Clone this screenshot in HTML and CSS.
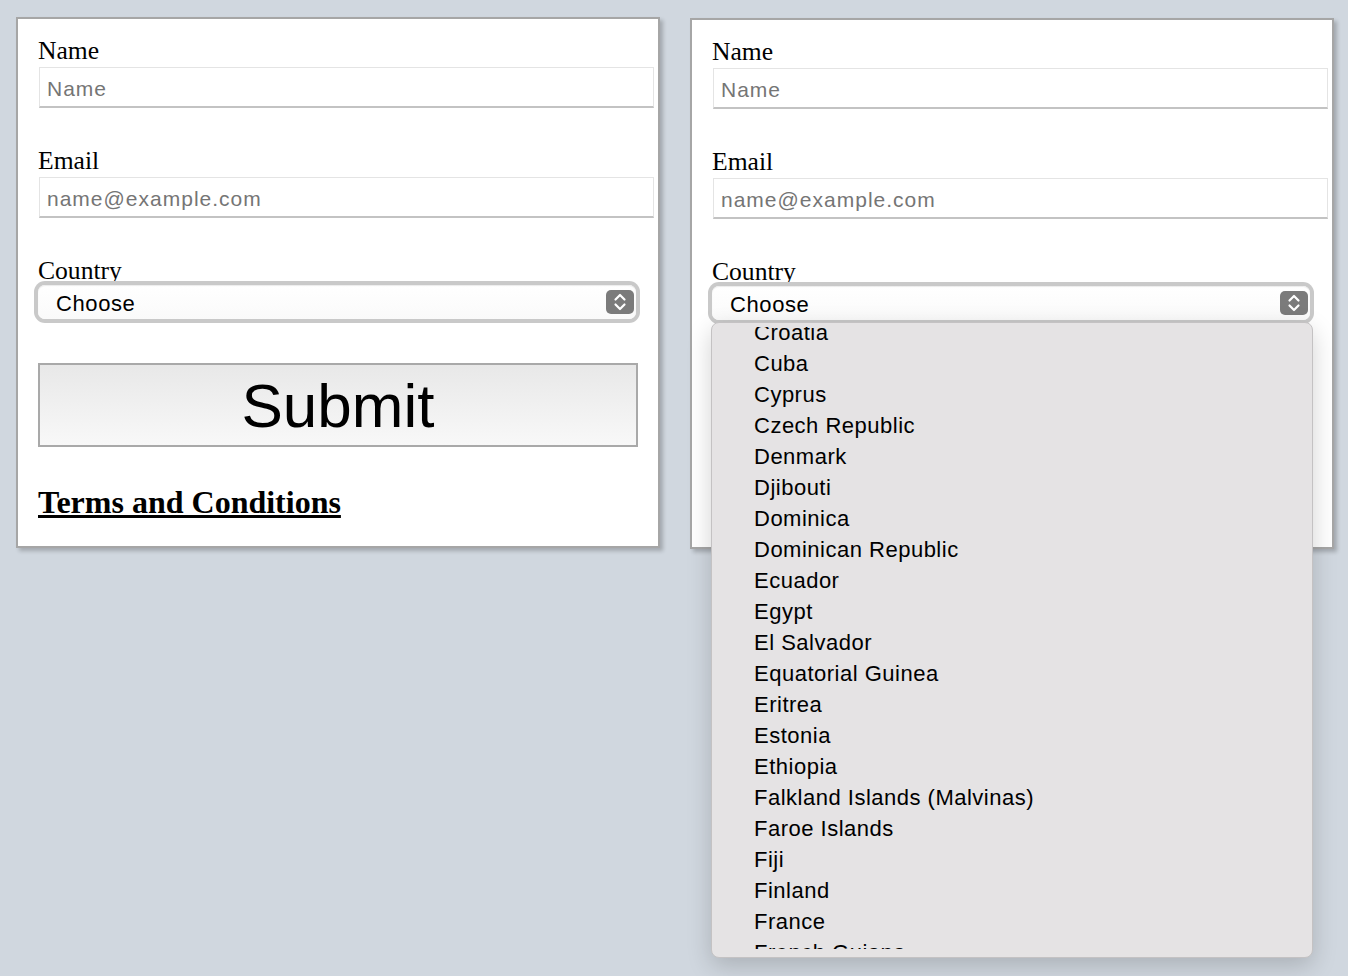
FILE: index.html
```html
<!DOCTYPE html>
<html lang="en">
<head>
<meta charset="utf-8">
<title>Form</title>
<link rel="stylesheet" href="styles.css">
</head>
<body>
<div class="page">
  <form class="card">
    <label class="label">Name</label>
    <div class="input"><span class="ph">Name</span></div>
    <label class="label">Email</label>
    <div class="input"><span class="ph">name@example.com</span></div>
    <label class="label">Country</label>
    <div class="select-wrap">
      <div class="select">
        <span class="sel-text">Choose</span>
        <span class="sel-icon">
          <svg width="28" height="24" viewBox="0 0 28 24"><rect x="0" y="0" width="28" height="24" rx="5" fill="#7b7b7b"/><path d="M9.5 9.5 L14 5 L18.5 9.5" fill="none" stroke="#fff" stroke-width="2.2" stroke-linecap="round" stroke-linejoin="round"/><path d="M9.5 14.5 L14 19 L18.5 14.5" fill="none" stroke="#fff" stroke-width="2.2" stroke-linecap="round" stroke-linejoin="round"/></svg>
        </span>
      </div>
    </div>
    <div class="button">Submit</div>
    <a class="terms" href="#">Terms and Conditions</a>
  </form>

  <form class="card card-right">
    <label class="label">Name</label>
    <div class="input"><span class="ph">Name</span></div>
    <label class="label">Email</label>
    <div class="input"><span class="ph">name@example.com</span></div>
    <label class="label">Country</label>
    <div class="select-wrap">
      <div class="select">
        <span class="sel-text">Choose</span>
        <span class="sel-icon">
          <svg width="28" height="24" viewBox="0 0 28 24"><rect x="0" y="0" width="28" height="24" rx="5" fill="#7b7b7b"/><path d="M9.5 9.5 L14 5 L18.5 9.5" fill="none" stroke="#fff" stroke-width="2.2" stroke-linecap="round" stroke-linejoin="round"/><path d="M9.5 14.5 L14 19 L18.5 14.5" fill="none" stroke="#fff" stroke-width="2.2" stroke-linecap="round" stroke-linejoin="round"/></svg>
        </span>
      </div>
      <div class="dropdown">
        <div class="viewport">
          <ul class="options">
            <li>Croatia</li>
            <li>Cuba</li>
            <li>Cyprus</li>
            <li>Czech Republic</li>
            <li>Denmark</li>
            <li>Djibouti</li>
            <li>Dominica</li>
            <li>Dominican Republic</li>
            <li>Ecuador</li>
            <li>Egypt</li>
            <li>El Salvador</li>
            <li>Equatorial Guinea</li>
            <li>Eritrea</li>
            <li>Estonia</li>
            <li>Ethiopia</li>
            <li>Falkland Islands (Malvinas)</li>
            <li>Faroe Islands</li>
            <li>Fiji</li>
            <li>Finland</li>
            <li>France</li>
            <li>French Guiana</li>
          </ul>
        </div>
      </div>
    </div>
    <div class="button">Submit</div>
    <a class="terms" href="#">Terms and Conditions</a>
  </form>
</div>
</body>
</html>
```
FILE: styles.css
```css
html, body {
  margin: 0;
  padding: 0;
  background: #d0d7df;
  height: 100%;
}

.page {
  display: flex;
  align-items: flex-start;
  gap: 30px;
  padding: 17px 0 0 16px;
}

.card {
  box-sizing: border-box;
  width: 644px;
  background: #ffffff;
  border: 2px solid #a6a6a6;
  box-shadow: 3px 3px 4px rgba(0, 0, 0, 0.22);
  padding: 17px 20px 25px 20px;
  display: flex;
  flex-direction: column;
  align-items: flex-start;
}

.card-right {
  margin-top: 1px;
}

.label {
  display: block;
  font-family: "Liberation Serif", "Times New Roman", serif;
  font-size: 25.6px;
  line-height: 30px;
  height: 30px;
  color: #000;
}

.input {
  box-sizing: border-box;
  width: 615px;
  height: 41px;
  margin: 1px 0 38px 1px;
  border: 1px solid #e4e4e4;
  border-bottom: 2px solid #c3c3c3;
  padding: 3px 7px 0 7px;
  display: flex;
  align-items: center;
  background: #fff;
}

.ph {
  font-family: "Liberation Sans", Arial, sans-serif;
  font-size: 21px;
  letter-spacing: 1px;
  color: #757575;
}

.select-wrap {
  position: relative;
  width: 598px;
  margin-top: -1px;
}

.select {
  box-sizing: border-box;
  width: 598px;
  height: 34px;
  border-radius: 7px;
  background: linear-gradient(#ffffff, #fafafa);
  box-shadow: 0 0 0 4px #c9c9c9, inset 0 1px 1px rgba(0, 0, 0, 0.08);
  display: flex;
  align-items: center;
  justify-content: space-between;
  padding: 0 2px 0 18px;
}

.sel-text {
  font-family: "Liberation Sans", Arial, sans-serif;
  font-size: 22px;
  letter-spacing: 0.6px;
  padding-top: 4px;
  color: #000;
}

.sel-icon {
  display: flex;
  align-items: center;
}

.button {
  box-sizing: border-box;
  width: 600px;
  height: 84px;
  margin-top: 44px;
  border: 2px solid #a9a9a9;
  background: linear-gradient(#e8e8e8, #f8f8f8);
  display: flex;
  align-items: center;
  justify-content: center;
  font-family: "Liberation Sans", Arial, sans-serif;
  font-size: 62px;
  color: #000;
}

.terms {
  display: block;
  margin-top: 37px;
  font-family: "Liberation Serif", "Times New Roman", serif;
  font-weight: bold;
  font-size: 32px;
  line-height: 37px;
  color: #000;
  text-decoration: underline;
}

.dropdown {
  position: absolute;
  top: 36px;
  left: -1px;
  width: 602px;
  height: 636px;
  box-sizing: border-box;
  background: #e5e3e4;
  border: 1px solid #c4c2c3;
  border-radius: 8px;
  box-shadow: 0 8px 24px rgba(0, 0, 0, 0.18);
  padding: 4px 0 8px 0;
  z-index: 10;
}

.viewport {
  height: 622px;
  overflow: hidden;
}

.options {
  list-style: none;
  margin: -10px 0 0 0;
  padding: 0;
}

.options li {
  height: 31px;
  line-height: 31px;
  padding-left: 42px;
  font-family: "Liberation Sans", Arial, sans-serif;
  font-size: 22px;
  letter-spacing: 0.5px;
  color: #000;
  white-space: nowrap;
}
```
